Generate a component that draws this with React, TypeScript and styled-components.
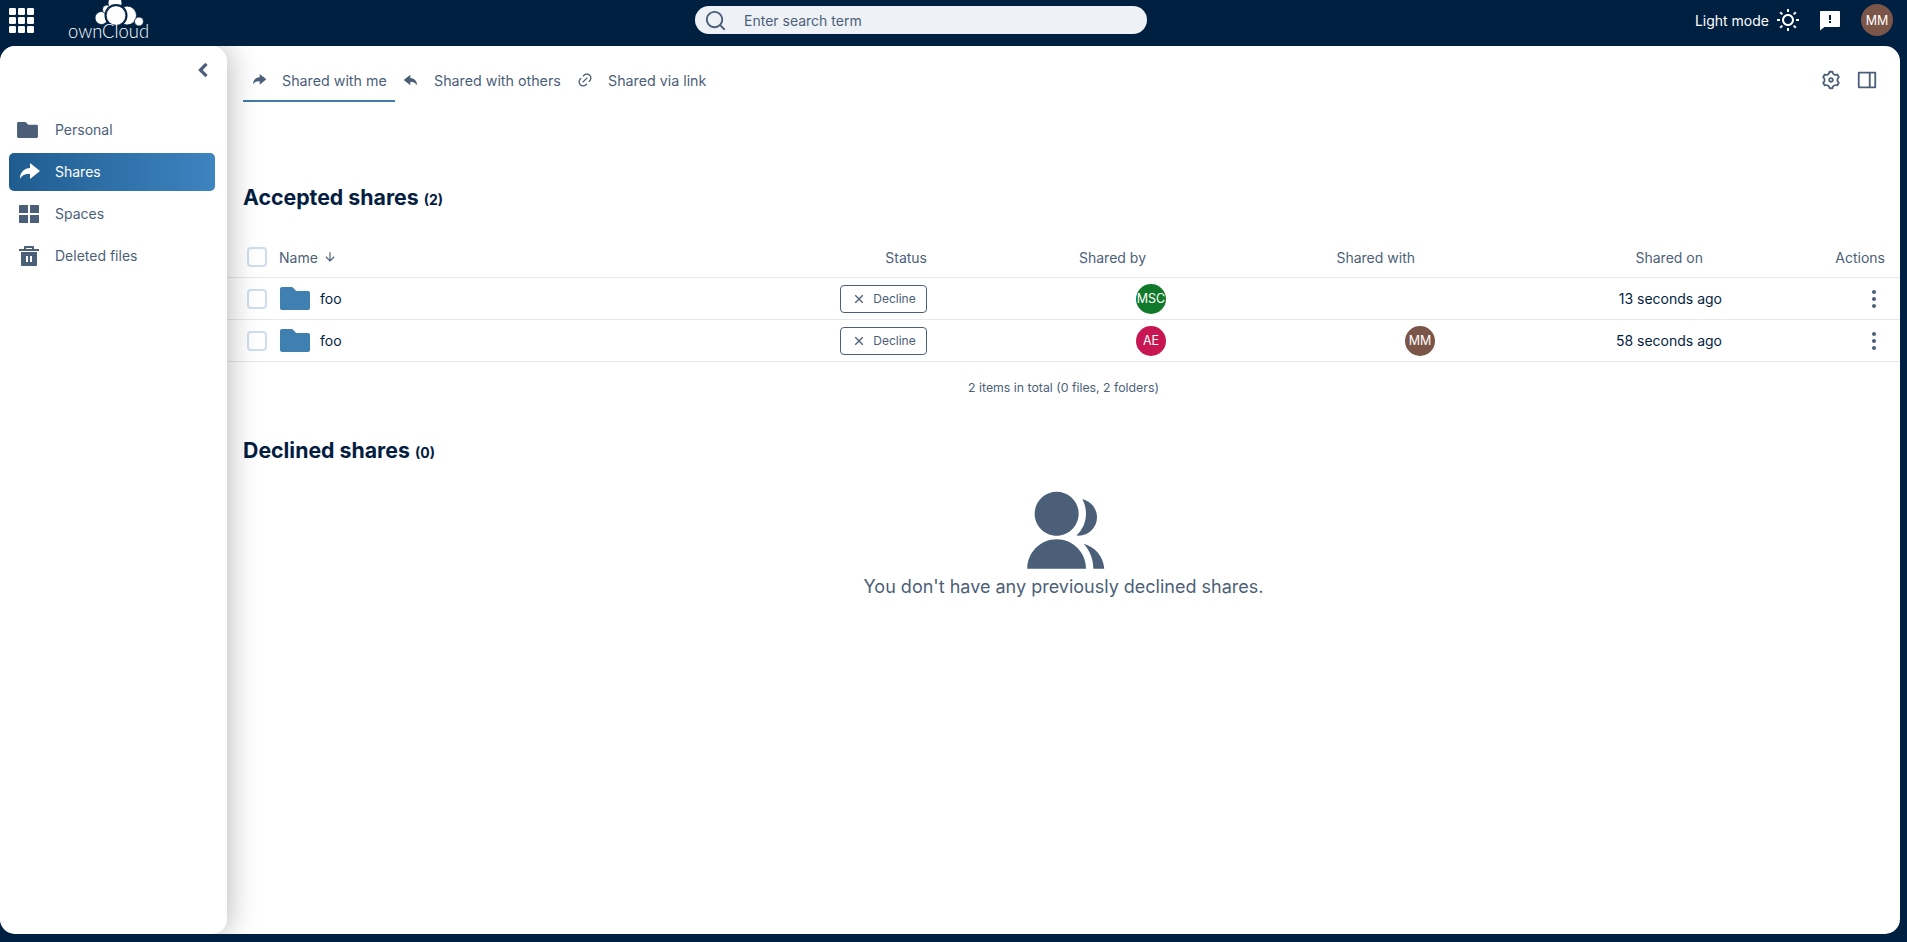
import React from "react";
import styled, { createGlobalStyle } from "styled-components";
import {
  RiArrowDownLine,
  RiArrowLeftSLine,
  RiCloseLine,
  RiDeleteBin5Fill,
  RiFeedbackFill,
  RiGroupFill,
  RiLayoutGridFill,
  RiLink,
  RiMore2Fill,
  RiReplyFill,
  RiSearchLine,
  RiSettings3Line,
  RiShareForwardFill,
  RiSideBarLine,
  RiSunLine,
} from "react-icons/ri";

const DARK = "#002042";
const INK = "#041e42";
const MUTED = "#4c5f79";

const Global = createGlobalStyle`
  html, body { margin: 0; padding: 0; height: 100%; overflow: hidden; }
  body { background: ${DARK}; font-family: Inter, "Noto Sans", "Liberation Sans", sans-serif; }
  * { box-sizing: border-box; }
`;

const Page = styled.div`
  display: flex;
  flex-direction: column;
  height: 942px;
  background: ${DARK};
`;

const TopBar = styled.header`
  display: grid;
  grid-template-columns: 695px 452px 1fr;
  align-items: center;
  height: 46px;
  flex: none;
`;

const Brand = styled.div`
  display: flex;
  align-items: flex-start;
  height: 46px;
  padding-left: 9px;
`;

const AppsButton = styled.svg`
  width: 25px;
  height: 25px;
  margin-top: 8px;
  fill: #fff;
`;

const Logo = styled.svg`
  width: 84px;
  height: 46px;
  margin-left: 33px;
  display: block;
`;

const LogoWord = styled.text`
  font-family: Lato, Inter, sans-serif;
  font-size: 19px;
  font-weight: 300;
  fill: #fff;
`;

const SearchBox = styled.div`
  display: flex;
  align-items: center;
  height: 28px;
  border-radius: 14px;
  background: #eef1f6;
  padding-left: 9px;
  gap: 17px;
  color: ${MUTED};
  font-size: 14px;
  margin-top: -6px;
  svg { width: 23px; height: 23px; flex: none; }
`;

const TopRight = styled.div`
  display: flex;
  align-items: center;
  justify-content: flex-end;
  padding-right: 14px;
  margin-top: -6px;
  color: #fff;
  font-size: 14px;
`;

const ModeLabel = styled.span`
  margin-right: 7px;
`;

const TopIconSlot = styled.span<{ $gap: number }>`
  display: inline-flex;
  margin-right: ${(p) => p.$gap}px;
  svg { width: 24px; height: 24px; fill: #fff; display: block; }
`;

const Avatar = styled.span<{ $bg: string; $size?: number }>`
  display: inline-flex;
  align-items: center;
  justify-content: center;
  flex: none;
  width: ${(p) => p.$size ?? 30}px;
  height: ${(p) => p.$size ?? 30}px;
  border-radius: 50%;
  background: ${(p) => p.$bg};
  color: #fff;
  font-size: 12.5px;
  white-space: nowrap;
`;

const Workspace = styled.div`
  display: flex;
  height: 888px;
  flex: none;
  margin-right: 7px;
  background: #fff;
  border-radius: 15px;
  overflow: hidden;
`;

const Sidebar = styled.aside`
  width: 227px;
  flex: none;
  background: #fff;
  border-radius: 15px;
  box-shadow: 2px 0 30px rgba(0, 0, 0, 0.28);
  position: relative;
  z-index: 1;
  padding: 12px 12px 0 9px;
`;

const CollapseRow = styled.div`
  display: flex;
  justify-content: flex-end;
  height: 24px;
  color: ${MUTED};
  svg { width: 24px; height: 24px; display: block; stroke: currentColor; stroke-width: 1.2; }
`;

const NavList = styled.nav`
  display: flex;
  flex-direction: column;
  gap: 4px;
  margin-top: 28.5px;
`;

const NavItem = styled.div<{ $active?: boolean }>`
  display: flex;
  align-items: center;
  height: 38px;
  border-radius: 5px;
  padding-left: 8px;
  font-size: 14px;
  color: ${(p) => (p.$active ? "#fff" : MUTED)};
  background: ${(p) => (p.$active ? "linear-gradient(90deg, #1f5c8f, #3e84c1)" : "transparent")};
`;

const NavIcon = styled.span`
  display: flex;
  align-items: center;
  width: 24px;
  height: 24px;
  margin-right: 14px;
  svg { display: block; }
`;

const FolderGlyph = styled.svg<{ $w: number; $h: number; $fill: string }>`
  width: ${(p) => p.$w}px;
  height: ${(p) => p.$h}px;
  fill: ${(p) => p.$fill};
  flex: none;
  display: block;
`;

const Main = styled.main`
  flex: 1;
  min-width: 0;
  display: flex;
  flex-direction: column;
`;

const TabBar = styled.div`
  display: flex;
  align-items: flex-start;
  height: 56px;
  padding: 0 15px 0 16px;
`;

const Tab = styled.div<{ $active?: boolean; $w: number }>`
  display: flex;
  align-items: center;
  width: ${(p) => p.$w}px;
  height: 56px;
  padding: 20px 0 6px 8px;
  font-size: 14.25px;
  white-space: nowrap;
  color: ${MUTED};
  border-bottom: 2px solid ${(p) => (p.$active ? "#3f7bad" : "transparent")};
  svg { width: 16px; height: 16px; margin-right: 15px; flex: none; }
`;

const TabActions = styled.div`
  margin-left: auto;
  display: flex;
  align-items: center;
  gap: 14px;
  height: 52px;
  padding-right: 7px;
  padding-top: 16px;
  color: ${MUTED};
  svg { width: 22px; height: 22px; display: block; }
`;

const FlippedPanel = styled(RiSideBarLine)`
  transform: scaleX(-1);
`;

const SectionTitle = styled.h2<{ $top: number }>`
  margin: ${(p) => p.$top}px 0 0;
  padding-left: 16px;
  height: 30px;
  line-height: 30px;
  font-size: 21.3px;
  font-weight: 700;
  color: ${INK};
`;

const Count = styled.span`
  font-size: 14px;
  font-weight: 700;
`;

const Row = styled.div<{ $head?: boolean }>`
  display: grid;
  grid-template-columns: 1fr 167px 239px 269px 287px 163px;
  align-items: center;
  height: ${(p) => (p.$head ? 41 : 42)}px;
  padding: 0 15px 0 20px;
  border-bottom: 1px solid #e6e8eb;
  font-size: 14px;
  color: ${(p) => (p.$head ? MUTED : INK)};
`;

const HeadRow = styled(Row)`
  margin-top: 25px;
`;

const Cell = styled.div<{ $pad?: number }>`
  display: flex;
  align-items: center;
  justify-content: flex-end;
  padding-right: ${(p) => p.$pad ?? 0}px;
`;

const NameCell = styled.div`
  display: flex;
  align-items: center;
`;

const Check = styled.span`
  width: 20px;
  height: 20px;
  flex: none;
  border: 2px solid #cfdeee;
  border-radius: 4px;
  background: #fff;
  margin-right: 12px;
`;

const RowCheck = styled(Check)`
  margin-right: 13px;
`;

const SortIcon = styled(RiArrowDownLine)`
  width: 14px;
  height: 14px;
  margin-left: 5px;
`;

const ResourceName = styled.span`
  margin-left: 10px;
`;

const DeclineButton = styled.button`
  display: flex;
  align-items: center;
  justify-content: center;
  width: 87px;
  height: 28px;
  padding: 0;
  gap: 6px;
  border: 1px solid ${MUTED};
  border-radius: 4px;
  background: #fff;
  color: ${MUTED};
  font-family: inherit;
  font-size: 12px;
  svg { width: 16px; height: 16px; }
`;

const KebabSlot = styled.span`
  display: flex;
  margin-right: -1px;
  color: ${MUTED};
  svg { width: 24px; height: 24px; display: block; }
`;

const TableFooter = styled.div`
  margin-top: 17px;
  height: 18px;
  line-height: 18px;
  text-align: center;
  font-size: 12.3px;
  color: ${MUTED};
`;

const EmptyState = styled.div`
  display: flex;
  flex-direction: column;
  align-items: center;
  margin-top: 23px;
  color: ${MUTED};
  font-size: 18px;
  svg { width: 88px; height: 88px; display: block; }
`;

const EmptyText = styled.div`
  line-height: 24px;
  margin-top: -1px;
`;

const Folder = ({ w, h, fill }: { w: number; h: number; fill: string }) => (
  <FolderGlyph $w={w} $h={h} $fill={fill} viewBox="0 0 30 23" aria-hidden>
    <path d="M2 0h9.6c.6 0 1.1.3 1.5.7l2.6 2.9c.3.3.6.4 1 .4H28c1.1 0 2 .9 2 2v15c0 1.1-.9 2-2 2H2c-1.1 0-2-.9-2-2V2C0 .9.9 0 2 0z" />
  </FolderGlyph>
);

const AppsIcon = () => (
  <AppsButton viewBox="0 0 25 25" aria-hidden>
    {[0, 9, 18].flatMap((y) =>
      [0, 9, 18].map((x) => <rect key={`${x}-${y}`} x={x} y={y} width="7" height="7" rx="1.2" />)
    )}
  </AppsButton>
);

const OwnCloudLogo = () => (
  <Logo viewBox="0 0 84 46" aria-label="ownCloud">
    <g fill="#fff" stroke={DARK} strokeWidth="0.8">
      <circle cx="34.5" cy="18" r="6.5" />
      <circle cx="40" cy="9.5" r="4.5" />
      <circle cx="48" cy="3" r="7" />
      <circle cx="60" cy="15.5" r="9.5" />
      <circle cx="72" cy="21.5" r="4.5" />
      <circle cx="49" cy="15.5" r="11.5" fill={DARK} stroke="none" />
      <circle cx="49" cy="15.5" r="9.8" />
    </g>
    <LogoWord x="1" y="38" textLength="81" lengthAdjust="spacingAndGlyphs">ownCloud</LogoWord>
  </Logo>
);

export default function App() {
  return (
    <Page>
      <Global />
      <TopBar>
        <Brand>
          <AppsIcon />
          <OwnCloudLogo />
        </Brand>
        <SearchBox>
          <RiSearchLine />
          <span>Enter search term</span>
        </SearchBox>
        <TopRight>
          <ModeLabel>Light mode</ModeLabel>
          <TopIconSlot $gap={18}><RiSunLine /></TopIconSlot>
          <TopIconSlot $gap={19}><RiFeedbackFill /></TopIconSlot>
          <Avatar $bg="#7b5548" $size={32}>MM</Avatar>
        </TopRight>
      </TopBar>
      <Workspace>
        <Sidebar>
          <CollapseRow><RiArrowLeftSLine /></CollapseRow>
          <NavList>
            <NavItem>
              <NavIcon><Folder w={21} h={16} fill={MUTED} /></NavIcon>Personal
            </NavItem>
            <NavItem $active>
              <NavIcon><RiShareForwardFill size={24} /></NavIcon>Shares
            </NavItem>
            <NavItem>
              <NavIcon><RiLayoutGridFill size={24} /></NavIcon>Spaces
            </NavItem>
            <NavItem>
              <NavIcon><RiDeleteBin5Fill size={24} /></NavIcon>Deleted files
            </NavItem>
          </NavList>
        </Sidebar>
        <Main>
          <TabBar>
            <Tab $active $w={152}><RiShareForwardFill />Shared with me</Tab>
            <Tab $w={174}><RiReplyFill />Shared with others</Tab>
            <Tab $w={140}><RiLink />Shared via link</Tab>
            <TabActions>
              <RiSettings3Line />
              <FlippedPanel />
            </TabActions>
          </TabBar>
          <SectionTitle $top={80}>Accepted shares <Count>(2)</Count></SectionTitle>
          <HeadRow $head>
            <NameCell><Check />Name<SortIcon /></NameCell>
            <Cell>Status</Cell>
            <Cell $pad={20}>Shared by</Cell>
            <Cell $pad={20}>Shared with</Cell>
            <Cell $pad={19}>Shared on</Cell>
            <Cell>Actions</Cell>
          </HeadRow>
          <Row>
            <NameCell><RowCheck /><Folder w={30} h={23} fill="#4080b0" /><ResourceName>foo</ResourceName></NameCell>
            <Cell><DeclineButton><RiCloseLine />Decline</DeclineButton></Cell>
            <Cell><Avatar $bg="#107a2a">MSC</Avatar></Cell>
            <Cell />
            <Cell>13 seconds ago</Cell>
            <Cell><KebabSlot><RiMore2Fill /></KebabSlot></Cell>
          </Row>
          <Row>
            <NameCell><RowCheck /><Folder w={30} h={23} fill="#4080b0" /><ResourceName>foo</ResourceName></NameCell>
            <Cell><DeclineButton><RiCloseLine />Decline</DeclineButton></Cell>
            <Cell><Avatar $bg="#c81653">AE</Avatar></Cell>
            <Cell><Avatar $bg="#7b5548">MM</Avatar></Cell>
            <Cell>58 seconds ago</Cell>
            <Cell><KebabSlot><RiMore2Fill /></KebabSlot></Cell>
          </Row>
          <TableFooter>2 items in total (0 files, 2 folders)</TableFooter>
          <SectionTitle $top={38}>Declined shares <Count>(0)</Count></SectionTitle>
          <EmptyState>
            <RiGroupFill />
            <EmptyText>You don't have any previously declined shares.</EmptyText>
          </EmptyState>
        </Main>
      </Workspace>
    </Page>
  );
}
